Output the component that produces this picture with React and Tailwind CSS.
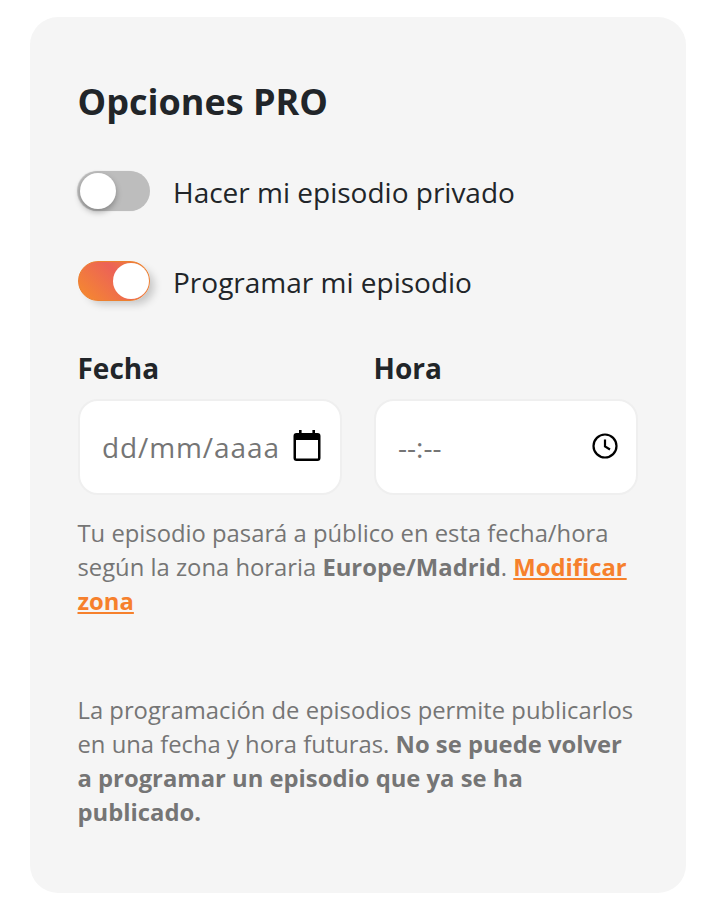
export default function App() {
  const sans = "font-['Open_Sans',sans-serif]";
  return (
    <div className={`w-[716px] h-[918px] bg-white pt-[17px] px-[30px] ${sans}`}>
      <div className="w-[656px] h-[876px] rounded-[28px] bg-[#f5f5f5] pl-[47.5px] pr-[48px] pt-[62px]">
        <h2 className="text-[36px] leading-[46px] font-bold text-[#212529]">Opciones PRO</h2>
        <div className="mt-[46px] flex items-center h-[40px]">
          <div className="ml-[0.5px] w-[72px] h-[40px] rounded-full bg-[#bdbdbd] p-[2px] flex shadow-[-1px_0_1px_rgba(0,0,0,0.2)]">
            <div className="w-[36px] h-[36px] rounded-full bg-white shadow-[0_3px_6px_rgba(0,0,0,0.3)]"></div>
          </div>
          <span className="ml-[23px] mt-[2px] text-[28px] leading-[40px] text-[#212529]">Hacer mi episodio privado</span>
        </div>
        <div className="mt-[50px] flex items-center h-[40px]">
          <div className="ml-[0.5px] w-[72px] h-[40px] rounded-full bg-[linear-gradient(45deg,#f68c2c,#ec6257_60%,#f08a2c)] border-[1.5px] border-[#ec8030] p-[0.5px] flex justify-end shadow-[6px_5px_8px_-2px_rgba(0,0,0,0.2)]">
            <div className="w-[36px] h-[36px] rounded-full bg-white"></div>
          </div>
          <span className="ml-[23px] mt-[2px] text-[28px] leading-[40px] text-[#212529]">Programar mi episodio</span>
        </div>
        <div className="mt-[47px] ml-[0.5px] grid grid-cols-2 gap-x-[32px]">
          <div>
            <div className="-ml-[0.5px] text-[28px] leading-[40px] font-bold text-[#212529]">Fecha</div>
            <div className="mt-[11px] h-[96px] rounded-[20px] bg-white border-2 border-[#efefef] flex items-center pl-[22px] pr-[19px] justify-between">
              <span className="text-[28px] leading-[36px] tracking-[0.9px] text-[#757575] whitespace-nowrap">dd/mm/aaaa</span>
              <svg width="28" height="31" viewBox="0 0 28 31" className="shrink-0 -mt-[3px]">
                <path d="M6 0h2.6v3H19.4V0H22v3h2.5A3 3 0 0 1 27.5 6v22a3 3 0 0 1-3 3h-21a3 3 0 0 1-3-3V6a3 3 0 0 1 3-3H6z M3 10v18a.6.6 0 0 0 .6.6h20.8a.6.6 0 0 0 .6-.6V10z" fill="#000" fillRule="evenodd" />
              </svg>
            </div>
          </div>
          <div>
            <div className="-ml-[0.5px] text-[28px] leading-[40px] font-bold text-[#212529]">Hora</div>
            <div className="mt-[11px] h-[96px] rounded-[20px] bg-white border-2 border-[#efefef] flex items-center pl-[22px] pr-[18px] justify-between">
              <span className="text-[28px] leading-[36px] text-[#757575]">--:--</span>
              <svg width="26" height="26" viewBox="0 0 26 26" className="shrink-0 -mt-[3px]" fill="none" stroke="#000">
                <circle cx="13" cy="13" r="11.5" strokeWidth="2.2" />
                <path d="M13 6.5V13.5L18 16.5" strokeWidth="2.2" />
              </svg>
            </div>
          </div>
        </div>
        <p className="mt-[21px] text-[23.8px] leading-[34px] text-[#757575]">
          Tu episodio pasará a público en esta fecha/hora según la zona horaria <b>Europe/Madrid</b>.{" "}
          <a className="font-bold underline text-[#f6802c]">Modificar zona</a>
        </p>
        <p className="mt-[75px] text-[23.8px] leading-[34px] text-[#757575]">
          La programación de episodios permite publicarlos en una fecha y hora futuras.{" "}
          <b>No se puede volver a programar un episodio que ya se ha publicado.</b>
        </p>
      </div>
    </div>
  );
}
